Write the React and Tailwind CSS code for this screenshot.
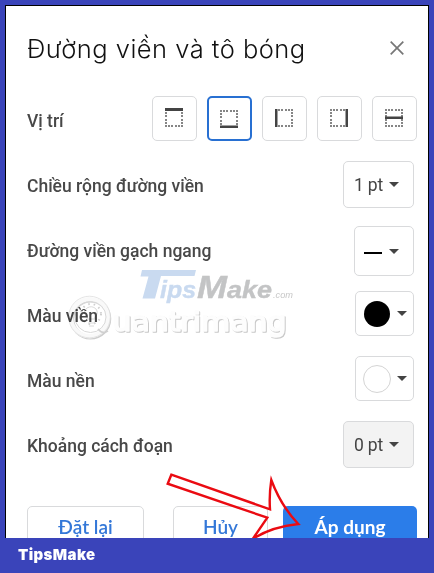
import React from "react";

const DOTS = [0, 3, 6, 10, 13, 16];

function BorderIcon({ side }) {
  const dots = [];
  DOTS.forEach((p) => {
    dots.push([p, 0], [p, 16]);
    if (p > 0 && p < 16) dots.push([0, p], [16, p]);
  });
  const bars = {
    top: [0, -1, 18, 3],
    bottom: [0, 15.5, 18, 2.5],
    left: [0, 0, 2.5, 18],
    right: [15.5, 0, 2.5, 18],
    middle: [0, 7.5, 18, 2.5],
  };
  const [x, y, w, h] = bars[side];
  return (
    <svg width="18" height="18" viewBox="0 0 18 18" className="overflow-visible">
      {dots.map(([dx, dy], i) => (
        <rect key={i} x={dx} y={dy} width="2" height="2" fill="#858585" />
      ))}
      <rect x={x} y={y} width={w} height={h} fill="#444" />
    </svg>
  );
}

function Caret() {
  return (
    <svg width="10" height="5" viewBox="0 0 10 5" className="shrink-0">
      <path d="M0 0h10L5 5z" fill="#444" />
    </svg>
  );
}

function Row({ label, children }) {
  return (
    <div className="flex h-[65px] items-start justify-between">
      <span className="h-[50px] whitespace-nowrap text-[17.5px] leading-[50px] font-medium text-[#484848]">{label}</span>
      {children}
    </div>
  );
}

const box = "mr-[3px] flex items-center justify-end rounded-[5px] border border-[#d9dadc] pr-[14px]";

function Watermark() {
  return (
    <svg className="pointer-events-none absolute left-0 top-0 mix-blend-multiply" width="434" height="573" viewBox="0 0 434 573">
      <g fill="#c9daf0" fontFamily="Liberation Sans, Arial, sans-serif" fontWeight="700" fontStyle="italic">
        <path d="M142 270H196L194.500 276H161L155 298.500H142.500L148.500 276.500H140.500Z" />
        <text x="160" y="298" fontSize="23" textLength="36" lengthAdjust="spacingAndGlyphs" stroke="#c9daf0" strokeWidth=".4">ips</text>
        <g fill="#c3c4c5" stroke="#c3c4c5" strokeWidth=".4">
          <text x="197" y="298" fontSize="32" textLength="30" lengthAdjust="spacingAndGlyphs">M</text>
          <text x="227" y="298" fontSize="24" textLength="45" lengthAdjust="spacingAndGlyphs">ake</text>
        </g>
        <text x="273" y="298" fontSize="8.500" fill="#c8c8c8" fontWeight="400" textLength="20" lengthAdjust="spacingAndGlyphs">.com</text>
      </g>
      <g fill="none">
        <circle cx="90.500" cy="318.800" r="18.500" stroke="#cdcdcd" strokeWidth="4.500" />
        <circle cx="89.500" cy="317.700" r="18.500" stroke="#f9f9f9" strokeWidth="4.500" />
        <circle cx="89.500" cy="317" r="20.800" stroke="#dedede" strokeWidth=".8" />
        <circle cx="90.500" cy="317" r="15.500" stroke="#d8d8d8" strokeWidth="1" />
        <circle cx="91" cy="314" r="10" stroke="#cfcfcf" strokeWidth="2" strokeDasharray="1.500 4" />
        <path d="M87 319v-2q-5-5 0-9 5-3 9 1 3 4-1 8v2zM88 323h7M89 326h5" stroke="#dadada" strokeWidth="1" />
        <path d="M98 329q5 6 10 2" stroke="#d0d0d0" strokeWidth="1.500" />
      </g>
      <g fontFamily="DejaVu Sans, sans-serif" fontSize="26.500" fontWeight="400" strokeLinejoin="round">
        <text x="113.500" y="332" textLength="174" lengthAdjust="spacingAndGlyphs" fill="#c9c9c9" stroke="#c9c9c9" strokeWidth="1.600">uantrimang</text>
        <text x="112.500" y="330.800" textLength="174" lengthAdjust="spacingAndGlyphs" fill="#fdfdfd" stroke="#fdfdfd" strokeWidth="1.600" aria-hidden="true">uantrimang</text>
      </g>
    </svg>
  );
}

export default function App() {
  return (
    <div className="relative h-[573px] w-[434px] overflow-hidden bg-[#3a44ba] pl-[5px] pt-[5px] font-['Roboto','Noto_Sans',sans-serif]">
      <main className="h-[533px] w-[424px] overflow-hidden border border-b-0 border-black bg-white pl-[21px] pr-[11px]">
        <header className="flex h-[90px] items-start justify-between pt-[22px]">
          <h1 className="whitespace-nowrap font-['Inter','Lato',sans-serif] text-[25.5px] leading-[41px] font-light tracking-[0.48px] text-[#111]">Đường viền và tô bóng</h1>
          <svg width="14" height="14" viewBox="0 0 14 14" className="mr-[13px] mt-[13px]">
            <path d="M.7.7l12.600 12.600M13.300.7L.7 13.300" stroke="#777" strokeWidth="1.700" />
          </svg>
        </header>

        <Row label="Vị trí">
          <div className="flex gap-[10px]">
            {["top", "bottom", "left", "right", "middle"].map((side) => (
              <div
                key={side}
                className={`flex h-[45px] w-[45px] items-start rounded-[5px] ${side === "bottom" ? "border-2 border-[#2870d2] pl-[11px] pt-[12px]" : "border border-[#d9dadc] pl-[12px] pt-[12px]"}`}
              >
                <BorderIcon side={side} />
              </div>
            ))}
          </div>
        </Row>
        <Row label="Chiều rộng đường viền">
          <div className={`${box} h-[47px] w-[71px] gap-[6px]`}>
            <span className="whitespace-nowrap pt-px text-[17.5px] tracking-[-0.2px] text-[#444]">1 pt</span>
            <Caret />
          </div>
        </Row>
        <Row label="Đường viền gạch ngang">
          <div className={`${box} h-[50px] w-[60px] gap-[7px]`}>
            <span className="mt-[4px] h-[2px] w-[18px] bg-black" />
            <Caret />
          </div>
        </Row>
        <Row label="Màu viền">
          <div className={`${box} h-[45px] w-[59px] gap-[7px] !pr-[6px]`}>
            <span className="size-[26px] rounded-full bg-black" />
            <Caret />
          </div>
        </Row>
        <Row label="Màu nền">
          <div className={`${box} h-[45px] w-[59px] gap-[6px] !pr-[6px]`}>
            <span className="size-[28px] rounded-full border border-[#d4d4d4] bg-white" />
            <Caret />
          </div>
        </Row>
        <Row label="Khoảng cách đoạn">
          <div className={`${box} h-[47px] w-[71px] gap-[6px] bg-[#f3f3f3]`}>
            <span className="whitespace-nowrap pt-px text-[17.5px] tracking-[-0.2px] text-[#444]">0 pt</span>
            <Caret />
          </div>
        </Row>

        <footer className="flex pt-[20px] font-['Lato','Inter',sans-serif] text-[19px] leading-[24px] font-semibold text-[#3478d8]">
          <button className="h-[46px] w-[117px] rounded-[5px] border border-[#d9dadc] pb-[4px]">Đặt lại</button>
          <button className="ml-[29px] h-[46px] w-[95px] rounded-[5px] border border-[#d9dadc] pb-[4px]">Hủy</button>
          <button className="ml-[15px] h-[46px] w-[134px] rounded-[5px] bg-[#2b7de9] pb-[4px] font-bold text-white">Áp dụng</button>
        </footer>
      </main>
      <div className="flex h-[35px] items-center pl-[13px] font-['Inter',sans-serif] text-[15px] font-black tracking-[0.4px] text-white">TipsMake</div>

      <Watermark />
      <svg className="pointer-events-none absolute left-0 top-0" width="434" height="538" viewBox="0 0 434 538">
        <path
          d="M171.300 474.700L270 509.300Q269 495 271.300 480Q281 506 298.300 524Q271 527 252.700 539L267.300 517.700L167.700 483.700Z"
          fill="none"
          stroke="#ea0b12"
          strokeWidth="2.400"
          strokeMiterlimit="8"
        />
      </svg>
    </div>
  );
}
